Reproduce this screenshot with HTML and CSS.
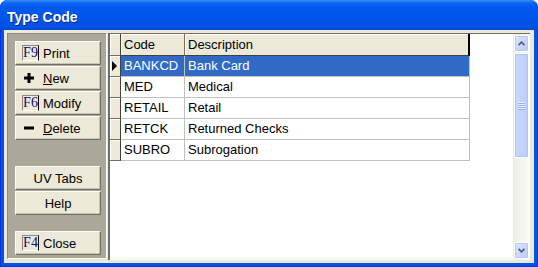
FILE: index.html
```html
<!DOCTYPE html>
<html>
<head>
    <meta charset="UTF-8">
    <title>Type Code</title>
    <link rel="stylesheet" href="styles.css">
</head>
<body>
    <div class="window">
        <div class="titlebar">Type Code</div>
        <div class="client">
            <div class="sidebar">
                <div class="btn"><span class="key">F9</span>Print</div>
                <div class="btn">
                    <svg class="ico" width="10" height="10" viewBox="0 0 10 10"><path d="M3.5 0h3v3.5H10v3H6.5V10h-3V6.5H0v-3h3.5z" fill="#000"/></svg>
                    <span><u>N</u>ew</span>
                </div>
                <div class="btn"><span class="key">F6</span>Modify</div>
                <div class="btn">
                    <svg class="ico" width="10" height="10" viewBox="0 0 10 10"><rect x="0" y="3.5" width="10" height="3" fill="#000"/></svg>
                    <span><u>D</u>elete</span>
                </div>
                <div class="btn center gap-big">UV Tabs</div>
                <div class="btn center">Help</div>
                <div class="btn gap-small"><span class="key">F4</span>Close</div>
            </div>
            <div class="grid">
                <div class="grid-body">
                    <div class="row head">
                        <div class="ind"></div>
                        <div class="cell">Code</div>
                        <div class="cell last">Description</div>
                    </div>
                    <div class="row selected">
                        <div class="ind"><span class="arrow"></span></div>
                        <div class="cell">BANKCD</div>
                        <div class="cell">Bank Card</div>
                    </div>
                    <div class="row">
                        <div class="ind"></div>
                        <div class="cell">MED</div>
                        <div class="cell">Medical</div>
                    </div>
                    <div class="row">
                        <div class="ind"></div>
                        <div class="cell">RETAIL</div>
                        <div class="cell">Retail</div>
                    </div>
                    <div class="row">
                        <div class="ind"></div>
                        <div class="cell">RETCK</div>
                        <div class="cell">Returned Checks</div>
                    </div>
                    <div class="row">
                        <div class="ind"></div>
                        <div class="cell">SUBRO</div>
                        <div class="cell">Subrogation</div>
                    </div>
                </div>
                <div class="vscroll">
                    <div class="sb-btn">
                        <svg width="7" height="5" viewBox="0 0 7 5"><path d="M0.5 4.2L3.5 1.2L6.5 4.2" fill="none" stroke="#4d6185" stroke-width="1.8"/></svg>
                    </div>
                    <div class="thumb"><span class="grip"></span></div>
                    <div class="track"></div>
                    <div class="sb-btn">
                        <svg width="7" height="5" viewBox="0 0 7 5"><path d="M0.5 0.8L3.5 3.8L6.5 0.8" fill="none" stroke="#4d6185" stroke-width="1.8"/></svg>
                    </div>
                </div>
            </div>
        </div>
    </div>
</body>
</html>
```

FILE: styles.css
```css
body {
    margin: 0;
    background: #fff;
    font-family: "Liberation Sans", Arial, sans-serif;
    font-size: 13px;
    color: #000;
}

.window {
    width: 538px;
    height: 267px;
    box-sizing: border-box;
    background: #0055e5;
    border-radius: 8px 8px 0 0;
    padding: 0 4px 4px;
    display: flex;
    flex-direction: column;
    box-shadow: inset 1px 0 #0831d9, inset -1px 0 #0831d9, inset 0 -1px #0831d9;
}

.titlebar {
    height: 30px;
    flex: none;
    box-sizing: border-box;
    margin: 0 -4px;
    padding: 3px 0 0 7px;
    border-radius: 8px 8px 0 0;
    background: linear-gradient(#3d8ff8 0, #0a66f2 3px, #0058ee 8px, #0055ea 20px, #0050e2 27px, #0048d4 30px);
    color: #fff;
    font-size: 14px;
    font-weight: bold;
    display: flex;
    align-items: center;
    text-shadow: 1px 1px #0b2a8a;
}

.client {
    flex: 1;
    background: #ece9d8;
    display: flex;
    gap: 1px;
    padding: 3px 4px 3px 3px;
}

/* left button panel */
.sidebar {
    width: 100px;
    height: 226px;
    flex: none;
    box-sizing: border-box;
    background: #aca899;
    border: 1px solid;
    border-color: #8d8a7c #fff #fff #8d8a7c;
    padding: 7px 0 0 7px;
    display: flex;
    flex-direction: column;
}

.btn {
    width: 86px;
    height: 24px;
    flex: none;
    margin-bottom: 1px;
    box-sizing: border-box;
    background: #ece9d8;
    border: 1px solid;
    border-color: #fff #716f64 #716f64 #fff;
    box-shadow: inset -1px -1px #c8c4b4;
    display: flex;
    align-items: center;
    padding-left: 6px;
}

.btn.center {
    justify-content: center;
    padding-left: 0;
}

.gap-big {
    margin-top: 25px;
}

.gap-small {
    margin-top: 15px;
}

.key {
    width: 17px;
    height: 16px;
    flex: none;
    box-sizing: border-box;
    border: 1px solid;
    border-color: #8d8a7c #000 #fff #8d8a7c;
    font-family: "Liberation Serif", "Times New Roman", serif;
    font-size: 14px;
    line-height: 14px;
    color: #0a0a80;
    display: flex;
    justify-content: center;
    margin-right: 4px;
}

.ico {
    margin: 0 9px 0 2px;
}

/* data grid */
.grid {
    flex: 1;
    height: 227px;
    box-sizing: border-box;
    border-top: 1px solid #716f64;
    border-left: 2px solid #716f64;
    background: #fff;
    display: flex;
}

.grid-body {
    flex: 1;
    overflow: hidden;
}

.row {
    display: grid;
    grid-template-columns: 11px 64px 285px;
    height: 21px;
    line-height: 20px;
}

.row.head {
    height: 22px;
    line-height: 21px;
}

.ind {
    background: #ece9d8;
    box-sizing: border-box;
    border-right: 1px solid #404040;
    border-bottom: 1px solid #716f64;
    box-shadow: inset 1px 1px #fff;
    display: flex;
    align-items: center;
    padding-left: 2px;
}

.cell {
    box-sizing: border-box;
    padding-left: 3px;
    border-right: 1px solid #c0c0c0;
    border-bottom: 1px solid #c0c0c0;
    white-space: nowrap;
    overflow: hidden;
}

.head .cell {
    background: #ece9d8;
    border-right-color: #716f64;
    border-bottom-color: #404040;
    box-shadow: inset 1px 1px #fff;
}

.head .cell.last {
    border-right: 2px solid #000;
}

.selected .cell {
    background: #316ac5;
    color: #fff;
}

.arrow {
    width: 0;
    height: 0;
    border-left: 5px solid #000;
    border-top: 5px solid transparent;
    border-bottom: 5px solid transparent;
}

/* xp scrollbar */
.vscroll {
    width: 17px;
    flex: none;
    display: flex;
    flex-direction: column;
    background: linear-gradient(90deg, #eeede5, #fbfbf8);
}

.sb-btn {
    height: 15px;
    margin: 1px;
    border-radius: 2px;
    border: 1px solid #fff;
    background: linear-gradient(135deg, #dde7fe, #b8cbf8);
    box-shadow: inset 0 0 0 1px #b4c8f5;
    display: flex;
    align-items: center;
    justify-content: center;
    flex: none;
}

.thumb {
    height: 103px;
    margin: 0 1px 1px;
    border-radius: 2px;
    border: 1px solid #fff;
    background: linear-gradient(90deg, #c9d9fd, #bccdf9);
    box-shadow: inset 0 0 0 1px #adc4f4;
    display: flex;
    align-items: center;
    justify-content: center;
    flex: none;
}

.grip {
    width: 7px;
    height: 8px;
    background: repeating-linear-gradient(#eef4fe 0 1px, #8cb0f8 1px 2px);
}

.track {
    flex: 1;
}
```
